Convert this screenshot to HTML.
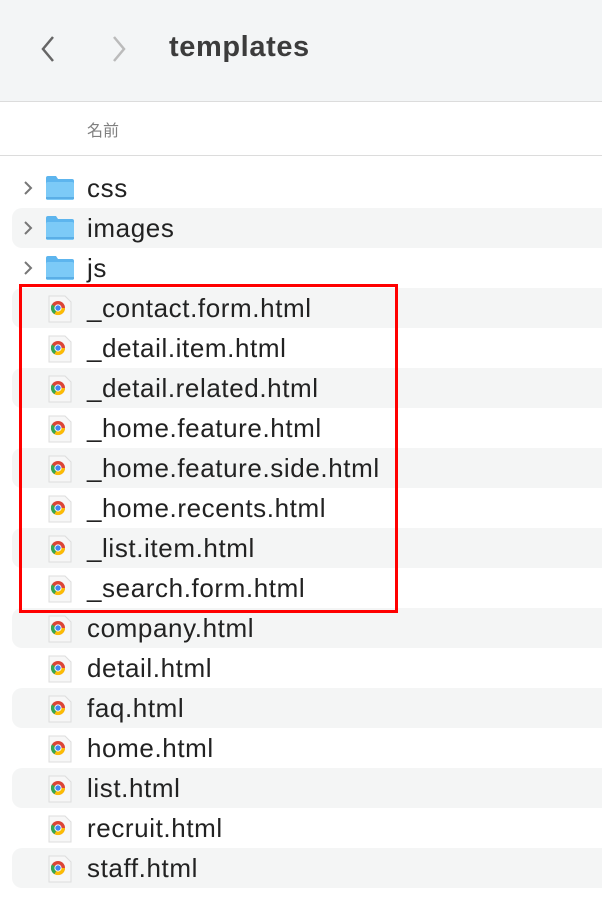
<!DOCTYPE html>
<html><head><meta charset="utf-8"><style>
body{margin:0;width:602px;height:919px;background:#fff;font-family:"Liberation Sans","Noto Sans CJK JP",sans-serif;position:relative;overflow:hidden}
.hdr{position:absolute;left:0;top:0;width:602px;height:101px;background:#f3f5f6;border-bottom:1px solid #dcdcdc}
.title{position:absolute;left:169px;top:31px;font-size:29px;letter-spacing:0.6px;font-weight:bold;color:#3c3c3c}
.col{position:absolute;left:87px;top:117px;font-size:16px;color:#808080}
.line2{position:absolute;left:0;top:155px;width:602px;height:1px;background:#dcdcdc}
.row{position:absolute;left:12px;width:600px;height:40px;border-radius:10px 0 0 10px}
.s{background:#f4f5f5}
.t{position:absolute;left:87px;font-size:26px;letter-spacing:0.6px;color:#222;line-height:40px}
.ic{position:absolute;left:47px}
.box{position:absolute;left:19px;top:284px;width:373px;height:323px;border:3px solid #f00}
</style></head><body>
<div class="hdr">
<svg style="position:absolute;left:38px;top:34px" width="20" height="30"><path d="M15 3 L5 15 L15 27" fill="none" stroke="#666" stroke-width="2.5"/></svg>
<svg style="position:absolute;left:110px;top:34px" width="20" height="30"><path d="M4 3 L14 15 L4 27" fill="none" stroke="#bbb" stroke-width="2.5"/></svg>
<div class="title">templates</div>
</div>
<div class="col">名前</div>
<div class="line2"></div>
<div id="rows"></div>
<script>
var names=[["css",1],["images",1],["js",1],["_contact.form.html"],["_detail.item.html"],["_detail.related.html"],["_home.feature.html"],["_home.feature.side.html"],["_home.recents.html"],["_list.item.html"],["_search.form.html"],["company.html"],["detail.html"],["faq.html"],["home.html"],["list.html"],["recruit.html"],["staff.html"]];
var h="";
names.forEach(function(n,i){var y=168+40*i;
if(i%2==1)h+='<div class="row s" style="top:'+y+'px"></div>';
if(n[1]){h+='<svg class="ic" style="left:22px;top:'+(y+12)+'px" width="12" height="16"><path d="M3 2 L9 8 L3 14" fill="none" stroke="#777" stroke-width="2"/></svg>';
h+='<svg class="ic" style="left:45px;top:'+(y+7)+'px" width="30" height="26"><path d="M1 3 Q1 1 3 1 L11 1 L13 4 L27 4 Q29 4 29 6 L29 23 Q29 25 27 25 L3 25 Q1 25 1 23Z" fill="#5db5ee"/><rect x="1" y="7" width="28" height="18" rx="2" fill="#7ccaf7"/><rect x="1" y="22" width="28" height="2" fill="#5aaee6"/></svg>';}
else{h+='<svg class="ic" style="top:'+(y+7)+'px" width="26" height="28"><path d="M2 1 L18 1 L24 7 L24 27 L2 27Z" fill="#f7f7f7" stroke="#ddd"/><circle cx="11" cy="13" r="7" fill="#db4437"/><path d="M11 13 L4.9 9.5 A7 7 0 0 0 7.5 19.1Z" fill="#34a853"/><path d="M11 13 L7.5 19.1 A7 7 0 0 0 18 13Z" fill="#fbbc05"/><circle cx="11" cy="13" r="3.6" fill="#fff"/><circle cx="11" cy="13" r="2.7" fill="#4285f4"/></svg>';}
h+='<div class="t" style="top:'+y+'px">'+n[0]+'</div>';});
document.getElementById("rows").innerHTML=h;
</script>
<div class="box"></div>
</body></html>
